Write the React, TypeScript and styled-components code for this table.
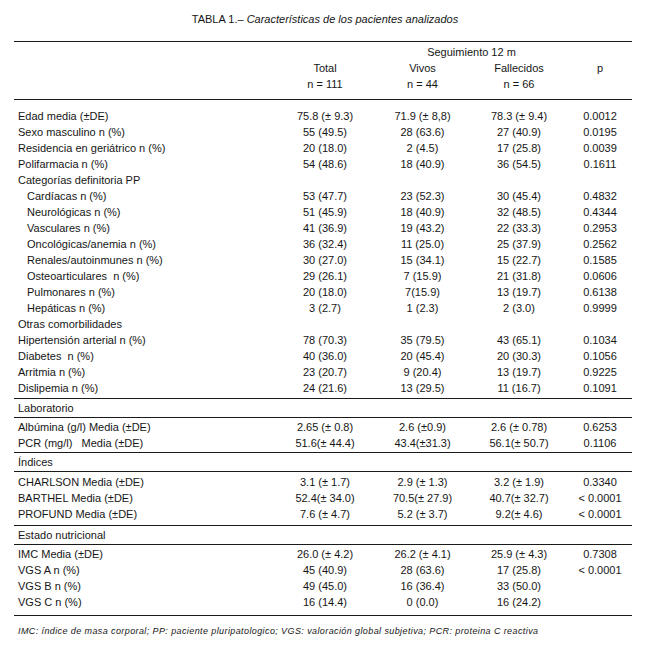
import React from 'react'
import styled, { createGlobalStyle } from 'styled-components'

type Row = {
  label: string
  indent?: boolean
  total?: string
  vivos?: string
  fall?: string
  p?: string
}

type Section = {
  title?: string
  padTop: number
  padBottom: number
  rows: Row[]
}

const sections: Section[] = [
  {
    padTop: 8,
    padBottom: 2,
    rows: [
      { label: 'Edad media (±DE)', total: '75.8 (± 9.3)', vivos: '71.9 (± 8,8)', fall: '78.3 (± 9.4)', p: '0.0012' },
      { label: 'Sexo masculino n (%)', total: '55 (49.5)', vivos: '28 (63.6)', fall: '27 (40.9)', p: '0.0195' },
      { label: 'Residencia en geriátrico n (%)', total: '20 (18.0)', vivos: '2 (4.5)', fall: '17 (25.8)', p: '0.0039' },
      { label: 'Polifarmacia n (%)', total: '54 (48.6)', vivos: '18 (40.9)', fall: '36 (54.5)', p: '0.1611' },
      { label: 'Categorías definitoria PP' },
      { label: 'Cardíacas n (%)', indent: true, total: '53 (47.7)', vivos: '23 (52.3)', fall: '30 (45.4)', p: '0.4832' },
      { label: 'Neurológicas n (%)', indent: true, total: '51 (45.9)', vivos: '18 (40.9)', fall: '32 (48.5)', p: '0.4344' },
      { label: 'Vasculares n (%)', indent: true, total: '41 (36.9)', vivos: '19 (43.2)', fall: '22 (33.3)', p: '0.2953' },
      { label: 'Oncológicas/anemia n (%)', indent: true, total: '36 (32.4)', vivos: '11 (25.0)', fall: '25 (37.9)', p: '0.2562' },
      { label: 'Renales/autoinmunes n (%)', indent: true, total: '30 (27.0)', vivos: '15 (34.1)', fall: '15 (22.7)', p: '0.1585' },
      { label: 'Osteoarticulares  n (%)', indent: true, total: '29 (26.1)', vivos: '7 (15.9)', fall: '21 (31.8)', p: '0.0606' },
      { label: 'Pulmonares n (%)', indent: true, total: '20 (18.0)', vivos: '7(15.9)', fall: '13 (19.7)', p: '0.6138' },
      { label: 'Hepáticas n (%)', indent: true, total: '3 (2.7)', vivos: '1 (2.3)', fall: '2 (3.0)', p: '0.9999' },
      { label: 'Otras comorbilidades' },
      { label: 'Hipertensión arterial n (%)', total: '78 (70.3)', vivos: '35 (79.5)', fall: '43 (65.1)', p: '0.1034' },
      { label: 'Diabetes  n (%)', total: '40 (36.0)', vivos: '20 (45.4)', fall: '20 (30.3)', p: '0.1056' },
      { label: 'Arritmia n (%)', total: '23 (20.7)', vivos: '9 (20.4)', fall: '13 (19.7)', p: '0.9225' },
      { label: 'Dislipemia n (%)', total: '24 (21.6)', vivos: '13 (29.5)', fall: '11 (16.7)', p: '0.1091' },
    ],
  },
  {
    title: 'Laboratorio',
    padTop: 1,
    padBottom: 1,
    rows: [
      { label: 'Albúmina (g/l) Media (±DE)', total: '2.65 (± 0.8)', vivos: '2.6 (±0.9)', fall: '2.6 (± 0.78)', p: '0.6253' },
      { label: 'PCR (mg/l)   Media (±DE)', total: '51.6(± 44.4)', vivos: '43.4(±31.3)', fall: '56.1(± 50.7)', p: '0.1106' },
    ],
  },
  {
    title: 'Índices',
    padTop: 2,
    padBottom: 3,
    rows: [
      { label: 'CHARLSON Media (±DE)', total: '3.1 (± 1.7)', vivos: '2.9 (± 1.3)', fall: '3.2 (± 1.9)', p: '0.3340' },
      { label: 'BARTHEL Media (±DE)', total: '52.4(± 34.0)', vivos: '70.5(± 27.9)', fall: '40.7(± 32.7)', p: '< 0.0001' },
      { label: 'PROFUND Media (±DE)', total: '7.6 (± 4.7)', vivos: '5.2 (± 3.7)', fall: '9.2(± 4.6)', p: '< 0.0001' },
    ],
  },
  {
    title: 'Estado nutricional',
    padTop: 1,
    padBottom: 5,
    rows: [
      { label: 'IMC Media (±DE)', total: '26.0 (± 4.2)', vivos: '26.2 (± 4.1)', fall: '25.9 (± 4.3)', p: '0.7308' },
      { label: 'VGS A n (%)', total: '45 (40.9)', vivos: '28 (63.6)', fall: '17 (25.8)', p: '< 0.0001' },
      { label: 'VGS B n (%)', total: '49 (45.0)', vivos: '16 (36.4)', fall: '33 (50.0)' },
      { label: 'VGS C n (%)', total: '16 (14.4)', vivos: '0 (0.0)', fall: '16 (24.2)' },
    ],
  },
]

export default function App() {
  return (
    <Page>
      <GlobalStyle />
      <Caption>
        TABLA 1.– <em>Características de los pacientes analizados</em>
      </Caption>

      <Table>
        <Header>
          <GridRow>
            <Span>Seguimiento 12 m</Span>
          </GridRow>
          <GridRow>
            <span />
            <Cell>Total</Cell>
            <Cell>Vivos</Cell>
            <Cell>Fallecidos</Cell>
            <Cell>p</Cell>
          </GridRow>
          <GridRow>
            <span />
            <Cell>n = 111</Cell>
            <Cell>n = 44</Cell>
            <Cell>n = 66</Cell>
            <Cell />
          </GridRow>
        </Header>

        {sections.map((s, i) => (
          <React.Fragment key={i}>
            {s.title && <SectionTitle>{s.title}</SectionTitle>}
            <Group $top={s.padTop} $bottom={s.padBottom}>
              {s.rows.map((r) => (
                <GridRow key={r.label}>
                  <Label $indent={r.indent}>{r.label}</Label>
                  <Cell>{r.total}</Cell>
                  <Cell>{r.vivos}</Cell>
                  <Cell>{r.fall}</Cell>
                  <Cell>{r.p}</Cell>
                </GridRow>
              ))}
            </Group>
          </React.Fragment>
        ))}
      </Table>

      <Footnote>
        IMC: índice de masa corporal; PP: paciente pluripatologico; VGS: valoración global subjetiva; PCR: proteina C reactiva
      </Footnote>
    </Page>
  )
}

const GlobalStyle = createGlobalStyle`
  body {
    margin: 0;
    background: #ffffff;
    font-family: "Liberation Sans", Arial, sans-serif;
    color: #161616;
  }
`

const Page = styled.div`
  width: 650px;
  padding-top: 12px;
`

const Caption = styled.div`
  text-align: center;
  font-size: 11px;
  line-height: 14px;
  margin-bottom: 15px;

  em {
    font-style: italic;
  }
`

const Table = styled.div`
  margin-left: 14px;
  width: 618px;
  border-top: 1px solid #1a1a1a;
  border-bottom: 1px solid #1a1a1a;
`

const Header = styled.div`
  padding: 2px 0 7px;
  border-bottom: 1px solid #1a1a1a;
`

const GridRow = styled.div`
  display: grid;
  grid-template-columns: 261px 100px 95px 98px 64px;
  height: 16px;
  line-height: 16px;
  font-size: 11px;
`

const Cell = styled.span`
  text-align: center;
  white-space: pre;
`

const Span = styled.span`
  grid-column: 3 / 5;
  text-align: center;
  white-space: pre;
`

const Label = styled.span<{ $indent?: boolean }>`
  padding-left: ${(p) => (p.$indent ? 13 : 4)}px;
  white-space: pre;
`

const Group = styled.div<{ $top: number; $bottom: number }>`
  padding: ${(p) => p.$top}px 0 ${(p) => p.$bottom}px;

  & + & {
    border-top: 1px solid #1a1a1a;
  }
`

const SectionTitle = styled.div`
  height: 18px;
  line-height: 18px;
  font-size: 11px;
  padding-left: 4px;
  border-top: 1px solid #1a1a1a;
  border-bottom: 1px solid #1a1a1a;
`

const Footnote = styled.div`
  margin: 9px 0 0 18px;
  font-size: 9px;
  line-height: 12px;
  font-style: italic;
  letter-spacing: 0.4px;
`
